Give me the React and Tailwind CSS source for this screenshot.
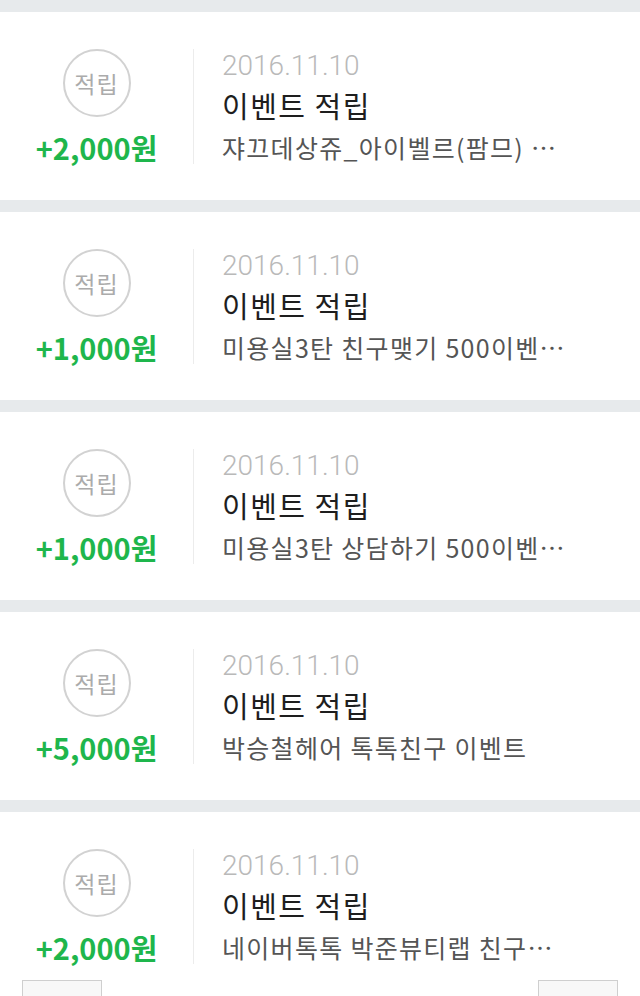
import React from "react";

const items = [
  { amount: "+2,000원", date: "2016.11.10", title: "이벤트 적립", desc: "쟈끄데상쥬_아이벨르(팜므) …" },
  { amount: "+1,000원", date: "2016.11.10", title: "이벤트 적립", desc: "미용실3탄 친구맺기 500이벤…" },
  { amount: "+1,000원", date: "2016.11.10", title: "이벤트 적립", desc: "미용실3탄 상담하기 500이벤…" },
  { amount: "+5,000원", date: "2016.11.10", title: "이벤트 적립", desc: "박승철헤어 톡톡친구 이벤트" },
  { amount: "+2,000원", date: "2016.11.10", title: "이벤트 적립", desc: "네이버톡톡 박준뷰티랩 친구…" },
];

const kr = "font-['Noto_Sans_CJK_KR','Noto_Sans',sans-serif]";

const PointRow = ({ item }) => (
  <div className="mt-3 flex h-[188px] shrink-0 items-center bg-white">
    <div className="flex w-[193px] flex-col items-center">
      <div className="flex h-[68px] w-[68px] items-center justify-center rounded-full border-2 border-[#d2d2d2]">
        <span className={`${kr} text-[23px] leading-none tracking-[1px] text-[#ababab]`}>적립</span>
      </div>
      <div className={`${kr} mt-[14px] text-[29px] font-bold leading-[32px] text-[#1eb64c]`}>
        {item.amount}
      </div>
    </div>
    <div className="h-[115px] w-px bg-[#ececec]" />
    <div className="flex flex-col pl-[28px]">
      <div className="font-['Roboto',sans-serif] text-[28px] font-light leading-[30px] text-[#b9b9b9]">
        {item.date}
      </div>
      <div className={`${kr} mt-[6px] text-[29px] leading-[36px] tracking-[1.5px] text-[#1e1e1e]`}>{item.title}</div>
      <div className={`${kr} mt-[9px] text-[25px] leading-[30px] tracking-[1.3px] text-[#555555]`}>{item.desc}</div>
    </div>
  </div>
);

export default function App() {
  return (
    <div className="relative flex h-[996px] w-[640px] flex-col overflow-hidden bg-[#e7eaec]">
      {items.map((item, i) => (
        <PointRow key={i} item={item} />
      ))}
      {/* paging buttons peeking in at the bottom */}
      <div className="absolute left-[22px] top-[980px] h-10 w-[80px] border border-[#cfcfcf] bg-[#f8f8f8]" />
      <div className="absolute left-[538px] top-[980px] h-10 w-[80px] border border-[#cfcfcf] bg-[#f8f8f8]" />
    </div>
  );
}
